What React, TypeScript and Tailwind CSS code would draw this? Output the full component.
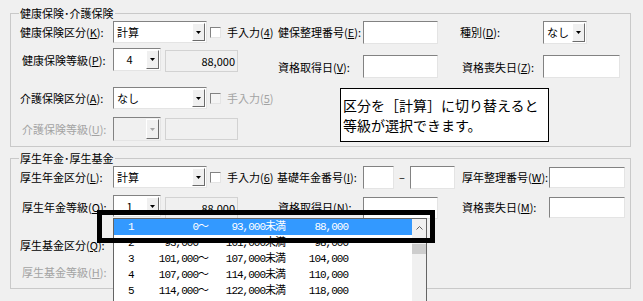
import React from "react";

const sunken =
  "border border-t-[#828282] border-l-[#828282] border-r-[#e4e4e4] border-b-[#e4e4e4]";

function K({ k }: { k: string }) {
  return (
    <>
      (<span className="underline underline-offset-[1px]">{k}</span>):
    </>
  );
}

function Lbl({ className = "", dim, children }: { className?: string; dim?: boolean; children: React.ReactNode }) {
  return (
    <div
      className={`flex shrink-0 items-center whitespace-nowrap text-[11px] leading-[14px] ${
        dim ? "text-[#a3a3a3]" : "text-black"
      } ${className}`}
    >
      {children}
    </div>
  );
}

function Combo({ className = "", text, center, dim }: { className?: string; text?: string; center?: boolean; dim?: boolean }) {
  return (
    <div className={`flex shrink-0 ${sunken} ${dim ? "bg-[#f0f0f0]" : "bg-white"} ${className}`}>
      <div
        className={`flex min-w-0 flex-1 items-center whitespace-nowrap px-[3px] text-[11px] ${center ? "justify-center" : ""}`}
      >
        {text}
      </div>
      <div className="m-[1px] flex w-[13px] shrink-0 items-center justify-center border border-t-white border-l-white border-r-[#6b6b6b] border-b-[#6b6b6b] bg-[#f0f0f0]">
        <svg width="5" height="3" viewBox="0 0 5 3">
          <path d="M0 0h5L2.5 3z" fill={dim ? "#a6a6a6" : "#000"} />
        </svg>
      </div>
    </div>
  );
}

function Box({ className = "" }: { className?: string }) {
  return <div className={`shrink-0 bg-white ${sunken} ${className}`} />;
}

function Val({ className = "", text }: { className?: string; text?: string }) {
  return (
    <div
      className={`flex h-[22px] w-[73px] shrink-0 items-center justify-end border border-[#d2d2d2] pr-[2px] text-[11px] ${className}`}
    >
      {text}
    </div>
  );
}

function Check({ dim }: { dim?: boolean }) {
  return <div className={`ml-[3px] h-[11px] w-[11px] shrink-0 ${sunken} ${dim ? "bg-[#f4f4f4]" : "bg-white"}`} />;
}

const grades = [
  ["1", "0～", "93,000未満", "88,000"],
  ["2", "93,000～", "101,000未満", "98,000"],
  ["3", "101,000～", "107,000未満", "104,000"],
  ["4", "107,000～", "114,000未満", "110,000"],
  ["5", "114,000～", "122,000未満", "118,000"],
];

export default function App() {
  return (
    <div className="relative h-[301px] w-[643px] overflow-hidden bg-[#f0f0f0] pl-[10px] pt-[5px] font-['Noto_Sans_CJK_JP',sans-serif] text-black">
      <fieldset className="h-[142px] w-[621px] border border-[#c9c9c9] pl-[9px]">
        <legend className="-ml-[1px] px-[1px] text-[11px] leading-[16px]">健康保険･介護保険</legend>

        <div className="flex h-[22px] items-center">
          <Lbl className="w-[93px]">
            健康保険区分<K k="K" />
          </Lbl>
          <Combo className="h-[22px] w-[94px]" text="計算" />
          <Check />
          <Lbl className="ml-[6px] w-[51px]">
            手入力(<span className="underline">4</span>)
          </Lbl>
          <Lbl className="w-[85px]">
            健保整理番号<K k="E" />
          </Lbl>
          <Box className="h-[23px] w-[75px]" />
          <Lbl className="ml-[22px] w-[83px]">
            種別<K k="D" />
          </Lbl>
          <Combo className="h-[23px] w-[44px]" text="なし" />
        </div>

        <div className="mt-[5px] flex h-[30px] items-start">
          <Lbl className="h-[24px] w-[93px] pl-[2px]">
            健康保険等級<K k="P" />
          </Lbl>
          <Combo className="h-[23px] w-[48px]" text="4" center />
          <Val className="ml-[4px] mt-[2px]" text="88,000" />
          <Lbl className="ml-[40px] mt-[7px] h-[23px] w-[85px]">
            資格取得日<K k="V" />
          </Lbl>
          <Box className="mt-[7px] h-[23px] w-[75px]" />
          <Lbl className="ml-[22px] mt-[7px] h-[23px] w-[83px] pl-[2px]">
            資格喪失日<K k="Z" />
          </Lbl>
          <Box className="mt-[7px] h-[23px] w-[77px]" />
        </div>

        <div className="mt-[9px] flex h-[22px] items-center">
          <Lbl className="w-[93px]">
            介護保険区分<K k="A" />
          </Lbl>
          <Combo className="h-[22px] w-[94px]" text="なし" />
          <Check dim />
          <Lbl dim className="ml-[6px] w-[51px]">
            手入力(<span className="underline">5</span>)
          </Lbl>
        </div>

        <div className="mt-[8px] flex h-[24px] items-center">
          <Lbl dim className="w-[93px] pl-[2px]">
            介護保険等級<K k="U" />
          </Lbl>
          <Combo dim className="h-[24px] w-[48px]" />
          <Val className="ml-[4px]" />
        </div>
      </fieldset>

      <fieldset className="mt-[3px] h-[139px] w-[621px] border border-[#c9c9c9] pl-[9px]">
        <legend className="-ml-[1px] px-[1px] text-[11px] leading-[16px]">厚生年金･厚生基金</legend>

        <div className="flex h-[22px] items-center">
          <Lbl className="w-[93px]">
            厚生年金区分<K k="L" />
          </Lbl>
          <Combo className="h-[22px] w-[94px]" text="計算" />
          <Check />
          <Lbl className="ml-[6px] w-[50px]">
            手入力(<span className="underline">6</span>)
          </Lbl>
          <Lbl className="w-[86px]">
            基礎年金番号<K k="I" />
          </Lbl>
          <Box className="h-[23px] w-[31px]" />
          <div className="w-[16px] text-center text-[11px]">–</div>
          <Box className="h-[23px] w-[45px]" />
          <Lbl className="ml-[7px] w-[87px]">
            厚年整理番号<K k="W" />
          </Lbl>
          <Box className="h-[21px] w-[76px]" />
        </div>

        <div className="mt-[7px] flex h-[24px] items-start">
          <Lbl className="h-[24px] w-[93px] pl-[2px]">
            厚生年金等級<K k="O" />
          </Lbl>
          <Combo className="h-[22px] w-[48px]" text="1" center />
          <Val className="ml-[4px] mt-[2px]" text="88,000" />
          <Lbl className="ml-[40px] h-[24px] w-[85px]">
            資格取得日<K k="N" />
          </Lbl>
          <Box className="mt-[2px] h-[22px] w-[75px]" />
          <Lbl className="ml-[24px] h-[24px] w-[87px]">
            資格喪失日<K k="M" />
          </Lbl>
          <Box className="mt-[2px] h-[21px] w-[76px]" />
        </div>

        <div className="mt-[15px] flex h-[22px] items-center">
          <Lbl className="w-[93px]">
            厚生基金区分<K k="Q" />
          </Lbl>
          <Combo className="h-[22px] w-[94px]" />
        </div>

        <div className="mt-[5px] flex h-[22px] items-center">
          <Lbl dim className="w-[93px] pl-[2px]">
            厚生基金等級<K k="H" />
          </Lbl>
          <Combo dim className="h-[22px] w-[48px]" />
          <Val className="ml-[4px]" />
        </div>
      </fieldset>

      {/* callout */}
      <div className="absolute left-[340px] top-[88px] h-[54px] w-[209px] border border-black bg-white pl-[2px] pt-[6px] text-[14px] leading-[20px]">
        <div>区分を［計算］に切り替えると</div>
        <div>等級が選択できます。</div>
      </div>

      {/* open drop list */}
      <div className="absolute left-[113px] top-[218px] flex h-[90px] w-[314px] border border-[#646464] bg-white font-['Liberation_Mono','Noto_Sans_CJK_JP',monospace] text-[11px] tracking-[-1px]">
        <div className="flex-1">
          {grades.map((g, i) => (
            <div key={g[0]} className={`flex h-[16px] items-center ${i === 0 ? "bg-[#3399ff] text-white" : "text-black"}`}>
              <div className="w-[36px] pl-[14px]">{g[0]}</div>
              <div className="w-[58px] text-right">{g[1]}</div>
              <div className="w-[77px] text-right">{g[2]}</div>
              <div className="w-[63px] text-right">{g[3]}</div>
            </div>
          ))}
        </div>
        <div className="flex w-[14px] flex-col bg-[#f0f0f0]">
          <div className="flex h-[17px] items-center justify-center">
            <svg width="7" height="4" viewBox="0 0 7 4">
              <path d="M0.5 3.5L3.5 0.5L6.5 3.5" stroke="#606060" fill="none" />
            </svg>
          </div>
          <div className="mt-[8px] h-[10px] bg-[#cdcdcd]" />
        </div>
      </div>

      {/* annotation frame */}
      <div className="absolute left-[97px] top-[210px] h-[33px] w-[338px] border-[5px] border-black" />
    </div>
  );
}
